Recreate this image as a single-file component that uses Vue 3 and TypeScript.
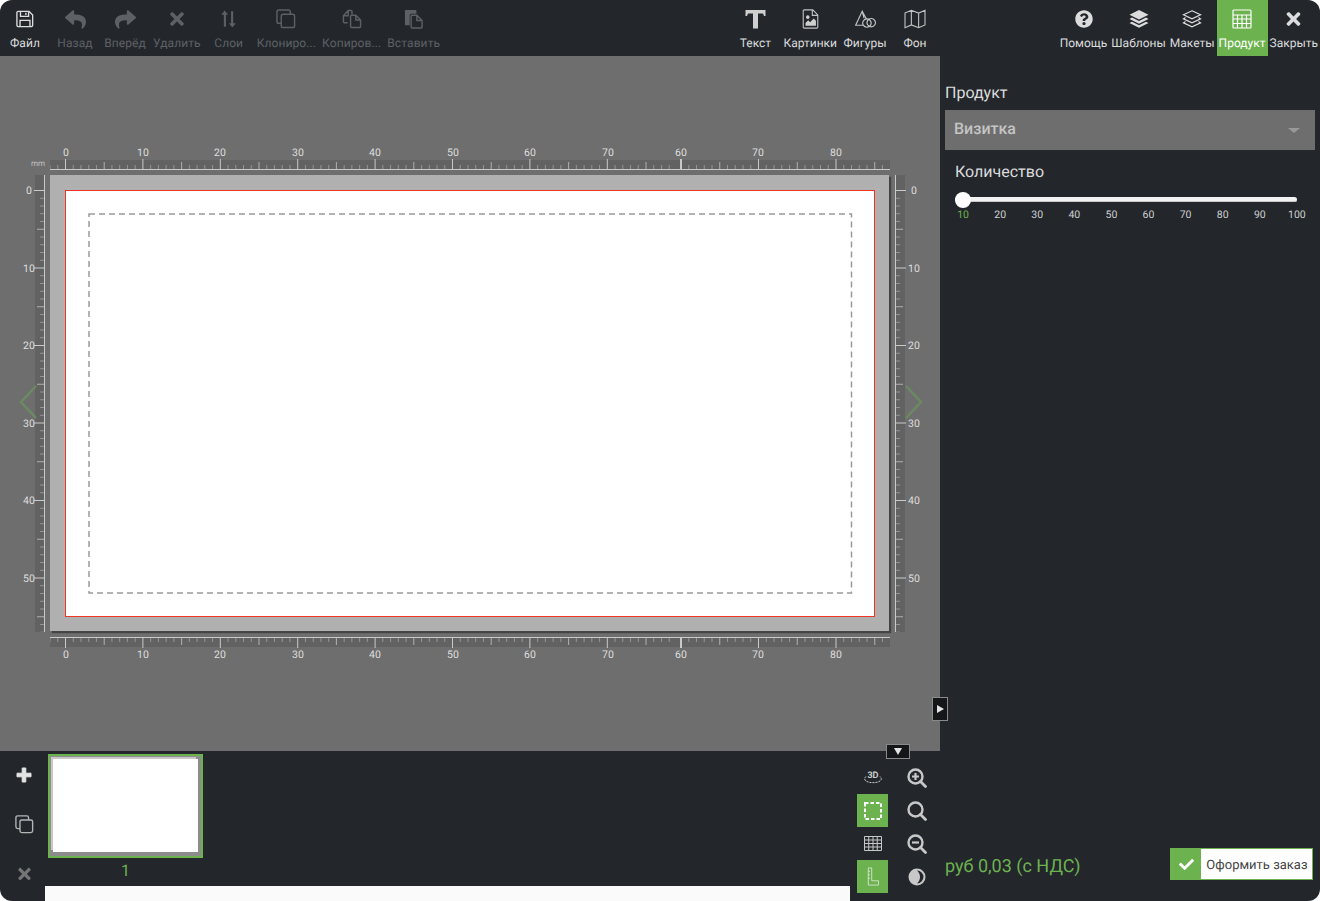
<script setup lang="ts">
interface Icon {
  vb: string;
  fill?: string;
  line?: string;
  w: number;
  h: number;
}

const X =
  "M242.72 256l100.07-100.07c12.28-12.28 12.28-32.19 0-44.48l-22.24-22.24c-12.28-12.28-32.19-12.28-44.48 0L176 189.28 75.93 89.21c-12.28-12.28-32.19-12.28-44.48 0L9.21 111.45c-12.28 12.28-12.28 32.19 0 44.48L109.28 256 9.21 356.07c-12.28 12.28-12.28 32.19 0 44.48l22.24 22.24c12.28 12.28 32.2 12.28 44.48 0L176 322.72l100.07 100.07c12.28 12.28 32.2 12.28 44.48 0l22.24-22.24c12.28-12.28 12.28-32.19 0-44.48L242.72 256z";
const REPLY =
  "M8.309 189.836L184.313 37.851C199.719 24.546 224 35.347 224 56.015v80.053c160.629 1.839 288 34.032 288 186.258 0 61.441-39.581 122.309-83.333 154.132-13.653 9.931-33.111-2.533-28.077-18.631 45.344-145.012-21.507-183.51-176.59-185.742V360c0 20.7-24.3 31.453-39.687 18.164l-176.004-152c-11.071-9.562-11.086-26.753 0-36.328z";
const SHARE =
  "M503.691 189.836L327.687 37.851C312.281 24.546 288 35.347 288 56.015v80.053C127.371 137.907 0 170.1 0 322.326c0 61.441 39.581 122.309 83.333 154.132 13.653 9.931 33.111-2.533 28.077-18.631C66.066 312.815 132.917 274.317 288 272.085V360c0 20.7 24.3 31.453 39.687 18.164l176.004-152c11.071-9.562 11.086-26.753 0-36.328z";
const QUESTION =
  "M504 256c0 136.997-111.043 248-248 248S8 392.997 8 256C8 119.083 119.043 8 256 8s248 111.083 248 248zM262.655 90c-54.497 0-89.255 22.957-116.549 63.758-3.536 5.286-2.353 12.415 2.715 16.258l34.699 26.31c5.205 3.947 12.621 3.008 16.665-2.122 17.864-22.658 30.113-35.797 57.303-35.797 20.429 0 45.698 13.148 45.698 32.958 0 14.976-12.363 22.667-32.534 33.976C247.128 238.528 216 254.941 216 296v4c0 6.627 5.373 12 12 12h56c6.627 0 12-5.373 12-12v-1.333c0-28.462 83.186-29.647 83.186-106.667 0-58.002-60.165-102-116.531-102zM256 338c-25.365 0-46 20.635-46 46 0 25.364 20.635 46 46 46s46-20.636 46-46c0-25.365-20.635-46-46-46z";
const CHECK =
  "M173.898 439.404l-166.4-166.4c-9.997-9.997-9.997-26.206 0-36.204l36.203-36.204c9.997-9.998 26.207-9.998 36.204 0L192 312.69 432.095 72.596c9.997-9.997 26.207-9.997 36.204 0l36.203 36.204c9.997 9.997 9.997 26.206 0 36.204l-294.4 294.401c-9.998 9.997-26.207 9.997-36.204-.001z";

const icons: Record<string, Icon> = {
  save: {
    vb: "0 0 20 20",
    w: 18,
    h: 18,
    line: "M2.500 1.500h12l4 4v11.500a1.500 1.500 0 0 1-1.500 1.500H2.500A1.500 1.500 0 0 1 1 17V3a1.500 1.500 0 0 1 1.500-1.500zM5 1.500v5.500h9V1.500M11 3v2.500M4.500 18.500v-7h11v7",
  },
  back: { vb: "0 0 512 512", w: 21, h: 21, fill: REPLY },
  forward: { vb: "0 0 512 512", w: 21, h: 21, fill: SHARE },
  del: { vb: "0 0 352 512", w: 14, h: 20, fill: X },
  layers: {
    vb: "0 0 20 22",
    w: 17,
    h: 20,
    fill: "M5.500 1 L9.500 6 H7 V20 H4.500 V6 H1.500z M14.500 21 L10.500 16 H13 V2 H15.500 V16 H18.500z",
  },
  clone: {
    vb: "0 0 21 21",
    w: 20,
    h: 20,
    line: "M5 15H3a2 2 0 0 1-2-2V3a2 2 0 0 1 2-2h10a2 2 0 0 1 2 2v2M7.500 5.500h10a2 2 0 0 1 2 2v10a2 2 0 0 1-2 2h-10a2 2 0 0 1-2-2v-10a2 2 0 0 1 2-2z",
  },
  copy: {
    vb: "0 0 21 21",
    w: 20,
    h: 20,
    line: "M6 14.500H2.500a1 1 0 0 1-1-1V7l5-5.500h3a1 1 0 0 1 1 1v3M6.500 1.500V7H1.500M11 6.500h3.500l5 5v7a1 1 0 0 1-1 1h-8.500a1 1 0 0 1-1-1v-11a1 1 0 0 1 1-1zM14.500 6.500v5h5",
  },
  paste: {
    vb: "0 0 21 21",
    w: 20,
    h: 20,
    fill: "M1 1h12v4H8a2 2 0 0 0-2 2v10H1z",
    line: "M8.500 6.500h5l5.500 5.500v7a1 1 0 0 1-1 1h-9.500a1 1 0 0 1-1-1V7.500a1 1 0 0 1 1-1zM13.500 6.500V12H19",
  },
  text: {
    vb: "0 0 20 20",
    w: 21,
    h: 20,
    fill: "M0 1h20v6h-1.500l-1-2.500H12.500V19.500h-5V4.500H2.500l-1 2.500H0z",
  },
  image: {
    vb: "0 0 18 22",
    w: 17,
    h: 20,
    line: "M2 1h9.500L17 6.500V20a1 1 0 0 1-1 1H2a1 1 0 0 1-1-1V2a1 1 0 0 1 1-1zM11 1v6h6",
    fill: "M3.500 18.500v-3l3-3 2 2 4-4 2.500 2.500v5.500zM6 7a2 2 0 1 1 0 4 2 2 0 0 1 0-4z",
  },
  shapes: {
    vb: "0 0 22 18",
    w: 21,
    h: 18,
    line: "M9.500 8L7.500 1 .7 15.500h7.500M7.500 1l4.500 8M17 8.500a4.400 4.400 0 1 1-.01 0zM12.500 8.800a4.400 4.400 0 1 0 .01 0z",
  },
  map: {
    vb: "0 0 24 22",
    w: 24,
    h: 20,
    line: "M1 4.500l7-3 8 3 7-3v16l-7 3-8-3-7 3zM8 1.500v16M16 4.500v16",
  },
  help: { vb: "0 0 512 512", w: 18, h: 18, fill: QUESTION },
  stack: {
    vb: "0 0 20 18",
    w: 20,
    h: 18,
    fill: "M10 0l9.500 4.800L10 9.600.5 4.800zM3 7.600l7 3.500 7-3.500 2.500 1.300L10 13.700.5 8.900zM3 11.700l7 3.500 7-3.500 2.500 1.300L10 17.800.5 13z",
  },
  stackLine: {
    vb: "0 0 20 18",
    w: 20,
    h: 18,
    line: "M10 .8l8.500 4-8.500 4-8.500-4zM3.500 7.500L1.500 8.800l8.500 4 8.500-4-2-1.300M3.500 11.500L1.500 12.800l8.500 4 8.500-4-2-1.300",
  },
  calc: {
    vb: "0 0 20 20",
    w: 20,
    h: 20,
    line: "M2 1h16a1 1 0 0 1 1 1v16a1 1 0 0 1-1 1H2a1 1 0 0 1-1-1V2a1 1 0 0 1 1-1zM1 6h18M1 10h18M1 14.500h18M5.500 6v13M10 6v13M14.500 6v13",
  },
  close: { vb: "0 0 352 512", w: 15, h: 20, fill: X },
};

const leftTools = [
  { label: "Файл", icon: "save", on: true },
  { label: "Назад", icon: "back" },
  { label: "Вперёд", icon: "forward" },
  { label: "Удалить", icon: "del" },
  { label: "Слои", icon: "layers" },
  { label: "Клониро...", icon: "clone" },
  { label: "Копиров...", icon: "copy" },
  { label: "Вставить", icon: "paste" },
];
const midTools = [
  { label: "Текст", icon: "text", on: true },
  { label: "Картинки", icon: "image", on: true },
  { label: "Фигуры", icon: "shapes", on: true },
  { label: "Фон", icon: "map", on: true },
];
const rightTools = [
  { label: "Помощь", icon: "help" },
  { label: "Шаблоны", icon: "stack" },
  { label: "Макеты", icon: "stackLine" },
  { label: "Продукт", icon: "calc", active: true },
  { label: "Закрыть", icon: "close" },
];

// ruler data, coordinates are relative to the sheet's edges
const MM = 7.74;
const topMarks: { p: number; size: number; wide?: boolean }[] = [];
for (let i = -2; 15.5 + i * MM < 625; i++) {
  topMarks.push({ p: 15.5 + i * MM, size: i % 10 === 0 ? 10 : i % 5 === 0 ? 7 : 4 });
}
// the scale restarts here, the reference jumps from 70 back to 60
for (let i = 0; 631 + i * 7.75 < 840; i++) {
  topMarks.push({ p: 631 + i * 7.75, size: i % 10 === 0 ? 10 : i % 5 === 0 ? 7 : 4, wide: i === 0 });
}
const topLabels = [
  { t: "0", p: 16 },
  { t: "10", p: 93 },
  { t: "20", p: 170 },
  { t: "30", p: 248 },
  { t: "40", p: 325 },
  { t: "50", p: 403 },
  { t: "60", p: 480 },
  { t: "70", p: 558 },
  { t: "60", p: 631 },
  { t: "70", p: 708 },
  { t: "80", p: 786 },
];
const sideMarks: { p: number; size: number }[] = [];
for (let i = 0; i <= 57; i++) {
  sideMarks.push({ p: 15.5 + i * 7.75, size: i % 10 === 0 ? 10 : i % 5 === 0 ? 7 : 4 });
}
const sideLabels = [0, 10, 20, 30, 40, 50].map((n) => ({ t: String(n), p: 15.5 + n * 7.75 }));

const tickColor = (size: number) => (size === 10 ? "#c9c9c9" : size === 7 ? "#b0b0b0" : "#949494");

const sliderTicks = [10, 20, 30, 40, 50, 60, 70, 80, 90, 100];
</script>

<template>
  <div class="app">
    <header class="toolbar">
      <div class="toolbar-main">
        <div class="group group-left">
          <div v-for="t in leftTools" :key="t.label" class="tool" :class="{ on: t.on }">
            <span class="tool-icon">
              <svg :viewBox="icons[t.icon].vb" :width="icons[t.icon].w" :height="icons[t.icon].h">
                <path v-if="icons[t.icon].fill" :d="icons[t.icon].fill" fill="currentColor" />
                <path v-if="icons[t.icon].line" :d="icons[t.icon].line" fill="none" stroke="currentColor" stroke-width="1.500" />
              </svg>
            </span>
            <span>{{ t.label }}</span>
          </div>
        </div>
        <div class="group">
          <div v-for="t in midTools" :key="t.label" class="tool" :class="{ on: t.on }">
            <span class="tool-icon">
              <svg :viewBox="icons[t.icon].vb" :width="icons[t.icon].w" :height="icons[t.icon].h">
                <path v-if="icons[t.icon].fill" :d="icons[t.icon].fill" fill="#cfcfcf" />
                <path v-if="icons[t.icon].line" :d="icons[t.icon].line" fill="none" stroke="#c4c4c4" stroke-width="1.200" />
              </svg>
            </span>
            <span>{{ t.label }}</span>
          </div>
        </div>
      </div>
      <div class="group">
        <div v-for="t in rightTools" :key="t.label" class="tool tool-slim on" :class="{ active: t.active }">
          <span class="tool-icon">
            <svg :viewBox="icons[t.icon].vb" :width="icons[t.icon].w" :height="icons[t.icon].h">
              <path v-if="icons[t.icon].fill" :d="icons[t.icon].fill" fill="currentColor" />
              <path v-if="icons[t.icon].line" :d="icons[t.icon].line" fill="none" stroke="currentColor" stroke-width="1.200" />
            </svg>
          </span>
          <span>{{ t.label }}</span>
        </div>
      </div>
    </header>

    <div class="body">
      <div class="left">
        <main class="workspace">
          <div class="stage">
            <div class="corner">mm</div>
            <svg class="ruler" width="840" height="25">
              <rect y="15" width="840" height="10" fill="#626262" />
              <rect y="24" width="840" height="1" fill="#c9c9c9" />
              <rect v-for="m in topMarks" :key="'t' + m.p" :x="m.p - (m.wide ? 1 : 0.5)" :y="24 - m.size" :width="m.wide ? 2 : 1" :height="m.size" :fill="tickColor(m.size)" />
              <text v-for="(l, i) in topLabels" :key="'tl' + i" :x="l.p" y="11" class="ruler-text" text-anchor="middle">{{ l.t }}</text>
            </svg>
            <div></div>

            <svg class="ruler" width="45" height="457">
              <rect x="35" width="10" height="457" fill="#626262" />
              <rect x="44" width="1" height="457" fill="#c9c9c9" />
              <rect v-for="m in sideMarks" :key="'l' + m.p" :x="44 - m.size" :y="m.p - 0.5" :width="m.size" height="1" :fill="tickColor(m.size)" />
              <text v-for="l in sideLabels" :key="'ll' + l.t" x="29" :y="l.p + 3.500" class="ruler-text" text-anchor="middle">{{ l.t }}</text>
            </svg>
            <div class="sheet">
              <div class="bleed">
                <svg class="safe" width="766" height="382">
                  <rect x="1" y="1" width="762.500" height="379" fill="none" stroke="#9a9a9a" stroke-width="1.500" stroke-dasharray="6 4" />
                </svg>
              </div>
            </div>
            <svg class="ruler" width="45" height="457">
              <rect width="10" height="457" fill="#626262" />
              <rect x="0" width="1" height="457" fill="#c9c9c9" />
              <rect v-for="m in sideMarks" :key="'r' + m.p" x="1" :y="m.p - 0.5" :width="m.size" height="1" :fill="tickColor(m.size)" />
              <text v-for="l in sideLabels" :key="'rl' + l.t" x="19" :y="l.p + 3.500" class="ruler-text" text-anchor="middle">{{ l.t }}</text>
            </svg>

            <div></div>
            <svg class="ruler" width="840" height="25">
              <rect width="840" height="10" fill="#626262" />
              <rect width="840" height="1" fill="#c9c9c9" />
              <rect v-for="m in topMarks" :key="'b' + m.p" :x="m.p - (m.wide ? 1 : 0.5)" y="1" :width="m.wide ? 2 : 1" :height="m.size" :fill="tickColor(m.size)" />
              <text v-for="(l, i) in topLabels" :key="'bl' + i" :x="l.p" y="21" class="ruler-text" text-anchor="middle">{{ l.t }}</text>
            </svg>
            <div></div>
          </div>

          <svg class="nav nav-prev" width="20" height="36" viewBox="0 0 20 36">
            <path d="M18 2L3 18l15 16" fill="none" stroke="#6a8a62" stroke-width="2.500" />
          </svg>
          <svg class="nav nav-next" width="20" height="36" viewBox="0 0 20 36">
            <path d="M2 2l15 16L2 34" fill="none" stroke="#6a8a62" stroke-width="2.500" />
          </svg>
          <div class="toggle toggle-side"><span class="tri-right"></span></div>
          <div class="toggle toggle-bottom"><span class="tri-down"></span></div>
        </main>

        <footer class="pages">
          <div class="page-actions">
            <svg width="16" height="16" viewBox="0 0 16 16">
              <path d="M6.200 1h3.600v5.200H15v3.600H9.800V15H6.200V9.800H1V6.200h5.200z" fill="#e4e4e4" stroke="#e4e4e4" stroke-linejoin="round" />
            </svg>
            <svg width="19" height="19" viewBox="0 0 21 21">
              <path :d="icons.clone.line" fill="none" stroke="#b5b5b5" stroke-width="1.500" />
            </svg>
            <svg width="13" height="18" viewBox="0 0 352 512">
              <path :d="X" fill="#757575" />
            </svg>
          </div>
          <div class="page-list">
            <div class="thumbs">
              <div class="thumb-item">
                <div class="thumb">
                  <div class="thumb-paper"></div>
                </div>
                <div class="thumb-num">1</div>
              </div>
            </div>
            <div class="scroll-strip"></div>
          </div>
          <div class="view-tools">
            <div class="view-btn">
              <svg width="20" height="16" viewBox="0 0 20 16">
                <path d="M3 6.500C1.500 8 1 9.500 3 11c3 2.200 11 2.200 14 0 2-1.500 1.500-3 0-4.500" fill="none" stroke="#d0d0d0" stroke-width="1" stroke-dasharray="2 1" />
                <text x="10" y="8" class="three-d" text-anchor="middle">3D</text>
              </svg>
            </div>
            <div class="view-btn">
              <svg width="20" height="20" viewBox="0 0 20 20">
                <circle cx="8.500" cy="8.500" r="7" fill="none" stroke="#c8c8c8" stroke-width="2.400" />
                <path d="M13.500 13.500L18.500 18.500" stroke="#c8c8c8" stroke-width="2.800" stroke-linecap="round" />
                <path d="M8.500 5v7M5 8.500h7" stroke="#c8c8c8" stroke-width="2.200" />
              </svg>
            </div>
            <div class="view-btn active">
              <svg width="20" height="20" viewBox="0 0 20 20">
                <rect x="2" y="2" width="16" height="16" fill="none" stroke="#fff" stroke-width="2" stroke-dasharray="3.500 2" />
              </svg>
            </div>
            <div class="view-btn">
              <svg width="20" height="20" viewBox="0 0 20 20">
                <circle cx="8.500" cy="8.500" r="7" fill="none" stroke="#c8c8c8" stroke-width="2.400" />
                <path d="M13.500 13.500L18.500 18.500" stroke="#c8c8c8" stroke-width="2.800" stroke-linecap="round" />
              </svg>
            </div>
            <div class="view-btn">
              <svg width="18" height="15" viewBox="0 0 18 15">
                <path d="M.5.500h17v14H.5zM.5 4h17M.5 7.500h17M.5 11h17M4.750.500v14M9 .500v14M13.250.500v14" fill="none" stroke="#c8c8c8" stroke-width="1" />
              </svg>
            </div>
            <div class="view-btn">
              <svg width="20" height="20" viewBox="0 0 20 20">
                <circle cx="8.500" cy="8.500" r="7" fill="none" stroke="#c8c8c8" stroke-width="2.400" />
                <path d="M13.500 13.500L18.500 18.500" stroke="#c8c8c8" stroke-width="2.800" stroke-linecap="round" />
                <path d="M5 8.500h7" stroke="#c8c8c8" stroke-width="2.200" />
              </svg>
            </div>
            <div class="view-btn active">
              <svg width="12" height="19" viewBox="0 0 14 22">
                <path d="M1.500 1h4v15h8v5h-12zM1.500 5h2M1.500 9h2M1.500 13h2" fill="none" stroke="#dbe9d4" stroke-width="1" />
              </svg>
            </div>
            <div class="view-btn">
              <svg width="18" height="18" viewBox="0 0 18 18">
                <circle cx="9" cy="9" r="8.500" fill="#c8c8c8" />
                <path d="M9 2.500a6.500 6.500 0 0 1 0 13c2-2 3-4 3-6.500s-1-4.500-3-6.500z" fill="#23272c" />
              </svg>
            </div>
          </div>
        </footer>
      </div>

      <aside class="panel">
        <h2 class="panel-title">Продукт</h2>
        <div class="select">
          <span>Визитка</span>
          <span class="select-arrow"></span>
        </div>
        <div class="qty">
          <div class="qty-title">Количество</div>
          <div class="slider">
            <div class="slider-thumb"></div>
          </div>
          <div class="slider-ticks">
            <span v-for="(n, i) in sliderTicks" :key="n" class="slider-tick" :class="{ current: i === 0 }">{{ n }}</span>
          </div>
        </div>
        <div class="checkout">
          <div class="price">руб 0,03 (с НДС)</div>
          <div class="order">
            <span class="order-icon">
              <svg width="15" height="15" viewBox="0 0 512 512"><path :d="CHECK" fill="#fff" /></svg>
            </span>
            <span class="order-text">Оформить заказ</span>
          </div>
        </div>
      </aside>
    </div>
  </div>
</template>

<style scoped>
.app {
  width: 1320px;
  height: 901px;
  display: flex;
  flex-direction: column;
  overflow: hidden;
  border-radius: 12px;
  background: #23272c;
  color: #dcdcdc;
  font-family: Roboto, "Liberation Sans", sans-serif;
  text-rendering: geometricPrecision;
}

.toolbar {
  height: 56px;
  flex: none;
  display: flex;
  justify-content: space-between;
}

.toolbar-main {
  width: 940px;
  display: flex;
  justify-content: space-between;
}

.group {
  display: flex;
}

.group-left {
  letter-spacing: 0.100px;
}

.tool {
  min-width: 50px;
  padding: 0 3px;
  box-sizing: border-box;
  display: flex;
  flex-direction: column;
  align-items: center;
  font-size: 12px;
  color: #5d6064;
  white-space: nowrap;
}

.tool.on {
  color: #dcdcdc;
}

.tool-slim {
  min-width: 0;
  padding: 0 2px;
}

.tool.active {
  background: #6cb24f;
  color: #fff;
}

.tool-icon {
  height: 36px;
  display: flex;
  align-items: center;
  justify-content: center;
  padding-top: 2px;
  box-sizing: border-box;
}

.body {
  flex: 1;
  display: flex;
  min-height: 0;
}

.left {
  width: 940px;
  display: flex;
  flex-direction: column;
}

.workspace {
  position: relative;
  height: 695px;
  flex: none;
  padding-top: 89px;
  box-sizing: border-box;
  background: #6e6e6e;
}

.stage {
  display: grid;
  grid-template-columns: 45px 840px 45px;
  grid-template-rows: 25px 457px 25px;
  gap: 5px;
}

.corner {
  font-size: 8px;
  color: #c4c4c4;
  text-align: right;
  padding-top: 14px;
}

.ruler {
  display: block;
}

.ruler-text {
  font-family: Roboto, "Liberation Sans", sans-serif;
  font-size: 10.500px;
  fill: #dedede;
}

.sheet {
  width: 839px;
  height: 456px;
  background: #b0b0b0;
  padding: 15px 14px 14px 15px;
  box-sizing: border-box;
  box-shadow: 2px 2px 1px #444;
}

.bleed {
  height: 427px;
  box-sizing: border-box;
  background: #fff;
  border: 1px solid #ee3524;
  padding: 22px;
}

.safe {
  display: block;
}

.nav {
  position: absolute;
}

.nav-prev {
  left: 18px;
  top: 328px;
}

.nav-next {
  left: 904px;
  top: 328px;
}

.toggle {
  position: absolute;
  box-sizing: border-box;
  background: #141618;
  border: 1px solid #8a8a8a;
  display: flex;
  align-items: center;
  justify-content: center;
  z-index: 2;
}

.toggle-side {
  left: 932px;
  top: 641px;
  width: 16px;
  height: 24px;
}

.toggle-bottom {
  left: 886px;
  top: 688px;
  width: 24px;
  height: 15px;
}

.tri-right {
  border-left: 7px solid #e4e4e4;
  border-top: 4px solid transparent;
  border-bottom: 4px solid transparent;
}

.tri-down {
  border-top: 7px solid #e4e4e4;
  border-left: 4px solid transparent;
  border-right: 4px solid transparent;
}

.pages {
  flex: 1;
  display: flex;
  min-height: 0;
}

.page-actions {
  width: 45px;
  flex: none;
  padding: 16px 0 18px 3px;
  box-sizing: border-box;
  display: flex;
  flex-direction: column;
  align-items: center;
  justify-content: space-between;
}

.page-list {
  width: 805px;
  flex: none;
  display: flex;
  flex-direction: column;
}

.thumbs {
  flex: 1;
  padding: 3px 0 0 3px;
}

.thumb-item {
  width: 155px;
}

.thumb {
  height: 104px;
  box-sizing: border-box;
  border: 2px solid #6cb24f;
  background: #8c8c8c;
  padding: 3px 3px 4px;
}

.thumb-paper {
  height: 100%;
  background: #fff;
  box-shadow: -2px -2px 0 #c8c8c8;
}

.thumb-num {
  text-align: center;
  font-size: 16px;
  color: #6cb24f;
  margin-top: 3px;
}

.scroll-strip {
  height: 15px;
  flex: none;
  background: #fafafa;
}

.view-tools {
  flex: 1;
  display: grid;
  grid-template-columns: 31px 31px;
  grid-auto-rows: 33px;
  column-gap: 13px;
  padding: 10px 0 0 7px;
}

.view-btn {
  display: flex;
  align-items: center;
  justify-content: center;
}

.view-btn.active {
  background: #6cb24f;
}

.three-d {
  font-family: Roboto, "Liberation Sans", sans-serif;
  font-size: 9px;
  font-weight: 500;
  fill: #e0e0e0;
}

.panel {
  flex: 1;
  display: flex;
  flex-direction: column;
  padding: 27px 5px 21px;
  box-sizing: border-box;
}

.panel-title {
  margin: 0;
  font-size: 16px;
  font-weight: 400;
  line-height: 20px;
  color: #dcdcdc;
}

.select {
  margin-top: 7px;
  height: 40px;
  flex: none;
  padding: 0 15px 3px 9px;
  box-sizing: border-box;
  display: flex;
  align-items: center;
  justify-content: space-between;
  background: #6e6e6e;
  font-size: 16px;
  font-weight: 500;
  color: #c4c4c4;
}

.select-arrow {
  border-top: 5px solid #999;
  border-left: 6px solid transparent;
  border-right: 6px solid transparent;
  margin-top: 3px;
}

.qty {
  padding: 12px 0 0 10px;
}

.qty-title {
  font-size: 16px;
  line-height: 20px;
  color: #dcdcdc;
}

.slider {
  position: relative;
  margin-top: 15px;
  width: 342px;
  height: 5px;
  border-radius: 3px;
  background: #f2f2f2;
  box-shadow: inset 0 -1px 0 #c8c8c8;
}

.slider-thumb {
  position: absolute;
  left: 0;
  top: -5.500px;
  width: 16px;
  height: 16px;
  border-radius: 50%;
  background: #fff;
}

.slider-ticks {
  display: flex;
  margin: 6px 0 0 -10.500px;
}

.slider-tick {
  width: 37.100px;
  flex: none;
  text-align: center;
  font-size: 10.500px;
  color: #cfcfcf;
}

.slider-tick.current {
  color: #6cb24f;
}

.checkout {
  margin-top: auto;
  padding-right: 2px;
  display: flex;
  align-items: center;
  justify-content: space-between;
}

.price {
  font-size: 18px;
  color: #6cb24f;
  margin-top: 4px;
}

.order {
  width: 143px;
  height: 32px;
  box-sizing: border-box;
  display: flex;
  align-items: stretch;
  background: #fff;
  border: 1px solid #6cb24f;
}

.order-icon {
  width: 30px;
  flex: none;
  display: flex;
  align-items: center;
  justify-content: center;
  background: #6cb24f;
}

.order-text {
  flex: 1;
  font-size: 13px;
  line-height: 33px;
  text-align: center;
  color: #444;
  white-space: nowrap;
}
</style>
